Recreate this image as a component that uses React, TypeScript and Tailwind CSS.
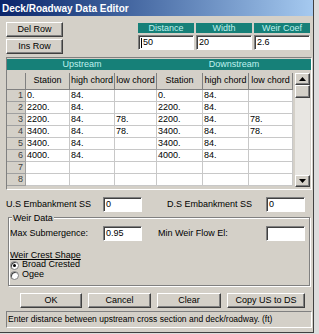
import React from "react";

const btn =
  "flex items-center justify-center bg-[#d4d0c8] border border-t-white border-l-white border-r-[#404040] border-b-[#404040] shadow-[inset_-1px_-1px_0_#808080] text-[9px] text-black";
const sunken =
  "bg-white border border-t-[#808080] border-l-[#808080] border-r-white border-b-white shadow-[inset_1px_1px_0_#404040]";

const rows: string[][] = [
  ["0.", "84.", "", "0.", "84.", ""],
  ["2200.", "84.", "", "2200.", "84.", ""],
  ["2200.", "84.", "78.", "2200.", "84.", "78."],
  ["3400.", "84.", "78.", "3400.", "84.", "78."],
  ["3400.", "84.", "", "3400.", "84.", ""],
  ["4000.", "84.", "", "4000.", "84.", ""],
  ["", "", "", "", "", ""],
  ["", "", "", "", "", ""],
];
const colW = ["w-[44px]", "w-[45px]", "w-[42px]", "w-[46px]", "w-[46px]", "w-[44px]"];
const heads = ["Station", "high chord", "low chord", "Station", "high chord", "low chord"];

function Input({ w, value, caret }: { w: string; value: string; caret?: boolean }) {
  return (
    <div className={`${sunken} ${w} h-[15px] flex items-center pl-[2px] text-[9px]`}>
      {caret && <span className="w-px h-[10px] bg-black mr-px" />}
      {value}
    </div>
  );
}

function Radio({ on, label }: { on?: boolean; label: string }) {
  return (
    <div className="flex items-center h-[10px] gap-[3px]">
      <div className="w-[9px] h-[9px] rounded-full bg-white border border-[#808080] shadow-[inset_1px_1px_0_#404040] flex items-center justify-center">
        {on && <div className="w-[3px] h-[3px] rounded-full bg-black" />}
      </div>
      <span>{label}</span>
    </div>
  );
}

export default function App() {
  return (
    <div
      className="w-[319px] h-[334px] bg-[#dcdcdc] overflow-hidden text-[9px] text-black"
      style={{ fontFamily: '"Liberation Sans", Arial, sans-serif' }}
    >
      <div className="w-[314px] h-[333px] bg-[#d4d0c8] border-r border-b border-[#404040] flex flex-col">
        {/* title */}
        <div className="h-[16px] bg-gradient-to-r from-[#0a246a] to-[#a6caf0] flex items-center pl-[2px] text-white font-bold text-[10px]">
          Deck/Roadway Data Editor
        </div>
        <div className="flex flex-col pl-[6px] pr-[1px]">
          {/* top */}
          <div className="flex mt-[6px]">
            <div className="flex flex-col gap-[2px] w-[57px]">
              <div className={`${btn} h-[15px]`}>Del Row</div>
              <div className={`${btn} h-[15px]`}>Ins Row</div>
            </div>
            <div className="flex gap-[2px] ml-[75px] mt-px">
              {[
                ["Distance", "50"],
                ["Width", "20"],
                ["Weir Coef", "2.6"],
              ].map(([h, v], i) => (
                <div key={h} className="flex flex-col w-[56px]">
                  <div className="h-[10px] bg-[#168078] text-[#bff2ee] flex items-center justify-center leading-none">
                    {h}
                  </div>
                  <div className="mt-[2px]">
                    <Input w="w-[56px]" value={v} caret={i === 0} />
                  </div>
                </div>
              ))}
            </div>
          </div>

          {/* table */}
          <div className="mt-[3px] h-[133px] border border-t-[#808080] border-l-[#808080] border-r-white border-b-white flex flex-col overflow-hidden">
            <div className="flex h-[11px] mt-px">
              <div className="w-[150px] bg-[#168078] text-[#bff2ee] flex items-center justify-center">Upstream</div>
              <div className="flex-1 bg-[#168078] text-[#bff2ee] flex items-center justify-center">Downstream</div>
            </div>
            <div className="flex mt-[3px]">
              <div className="flex flex-col">
                {/* header row */}
                <div className="flex h-[17px]">
                  <div className="w-[19px] bg-[#d4d0c8] border-r border-b border-[#808080]" />
                  {heads.map((h, i) => (
                    <div
                      key={i}
                      className={`${colW[i]} bg-[#d4d0c8] border-r border-b border-[#808080] flex items-center justify-center`}
                    >
                      {h}
                    </div>
                  ))}
                </div>
                {rows.map((r, ri) => (
                  <div key={ri} className="flex h-[12px]">
                    <div className="w-[19px] bg-[#d4d0c8] border-r border-b border-[#a0a0a0] flex items-center justify-end pr-[2px] text-[#404040]">
                      {ri + 1}
                    </div>
                    {r.map((c, ci) => (
                      <div
                        key={ci}
                        className={`${colW[ci]} bg-white border-r border-b border-[#c8c8c8] flex items-center pl-[1px]`}
                      >
                        {c}
                      </div>
                    ))}
                  </div>
                ))}
              </div>
              {/* scrollbar */}
              <div className="ml-[2px] w-[15px] h-[114px] bg-[#e8e6e2] flex flex-col justify-between">
                <div className="flex flex-col">
                  <div className={`${btn} h-[12px]`}>
                    <svg width="7" height="4" viewBox="0 0 7 4"><path d="M3.5 0L7 4H0z" fill="black" /></svg>
                  </div>
                  <div className={`${btn} h-[13px]`} />
                </div>
                <div className={`${btn} h-[12px]`}>
                  <svg width="7" height="4" viewBox="0 0 7 4"><path d="M0 0h7L3.5 4z" fill="black" /></svg>
                </div>
              </div>
            </div>
          </div>

          {/* embankment */}
          <div className="flex items-center mt-[7px] h-[15px]">
            <span className="w-[97px]">U.S Embankment SS</span>
            <Input w="w-[39px]" value="0" />
            <span className="w-[111px] text-right pr-[1px]">D.S Embankment SS</span>
            <span className="w-[13px]" />
            <Input w="w-[39px]" value="0" />
          </div>

          {/* weir data group */}
          <div className="relative mt-[5px] ml-[2px] w-[302px] h-[69px] border border-[#808080] shadow-[inset_1px_1px_0_white,1px_1px_0_white] flex flex-col">
            <span className="absolute -top-[6px] left-[3px] bg-[#d4d0c8] px-[1px]">Weir Data</span>
            <div className="flex items-center mt-[8px] h-[15px]">
              <span className="w-[94px] pl-px">Max Submergence:</span>
              <Input w="w-[39px]" value="0.95" />
              <span className="ml-[16px] w-[108px]">Min Weir Flow El:</span>
              <Input w="w-[39px]" value="" />
            </div>
            <div className="flex flex-col mt-[8px] pl-px">
              <span className="underline h-[11px]">Weir Crest Shape</span>
              <Radio on label="Broad Crested" />
              <Radio label="Ogee" />
            </div>
          </div>

          {/* buttons */}
          <div className="flex mt-[7px] h-[15px]">
            <div className={`${btn} ml-[14px] w-[62px]`}>OK</div>
            <div className={`${btn} ml-[6px] w-[63px]`}>Cancel</div>
            <div className={`${btn} ml-[6px] w-[64px]`}>Clear</div>
            <div className={`${btn} ml-[6px] w-[78px]`}>Copy US to DS</div>
          </div>

          {/* status */}
          <div className="mt-[3px] h-[17px] w-[306px] border border-t-[#808080] border-l-[#808080] border-r-white border-b-white flex items-center pl-[1px] text-[8.5px] whitespace-nowrap overflow-hidden">
            Enter distance between upstream cross section and deck/roadway. (ft)
          </div>
        </div>
      </div>
    </div>
  );
}
